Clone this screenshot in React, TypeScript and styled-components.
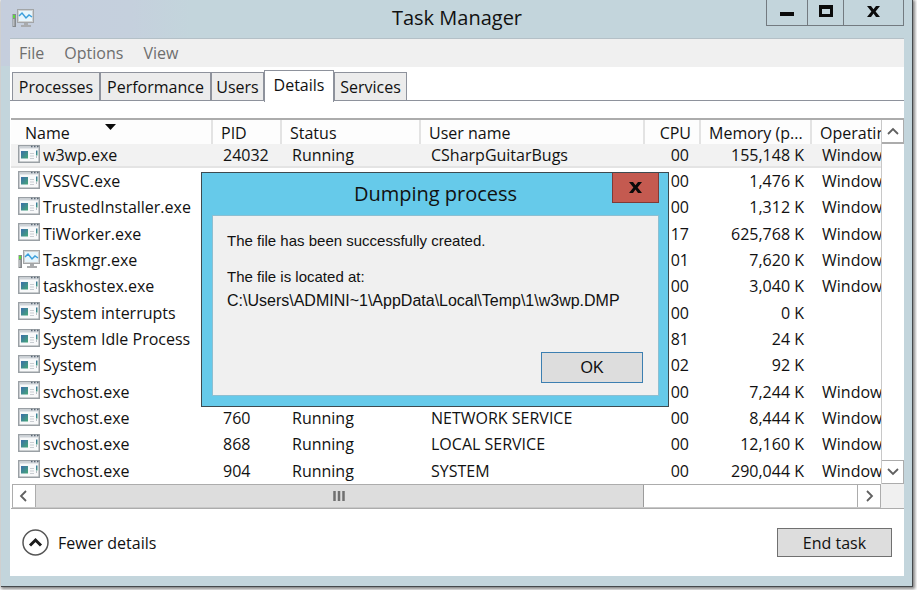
import React from "react";
import styled, { createGlobalStyle, css } from "styled-components";

const GlobalStyle = createGlobalStyle`
  *, *::before, *::after { box-sizing: border-box; }
  html, body { margin: 0; height: 100%; background: #ffffff; }
  #root { height: 100%; }
  body, button { font-family: "Open Sans", "Noto Sans", sans-serif; font-size: 16px; line-height: 20px; color: #111111; }
  button { margin: 0; padding: 0; border: 0; background: none; border-radius: 0; }
  svg { display: block; flex: none; }
`;

const Desktop = styled.div`
  min-height: 100vh;
  display: flex;
  padding: 0 4px 3px 1px;
  background: #ffffff;
  overflow: hidden;
`;

const Window = styled.section`
  position: relative;
  flex: 1;
  min-width: 0;
  display: flex;
  flex-direction: column;
  padding: 0 8px 10px 9px;
  background: linear-gradient(90deg, #c5cedd 0, #c5d0dd 130px, #c3d5dc 190px) 0 0 / 100% 66px no-repeat, #c3d5dc;
  border-right: 1px solid #45494c;
  border-bottom: 1px solid #45494c;
  box-shadow: 1px 1px 3px 1px #808080;
`;

const TitleBar = styled.header`
  height: 38px;
  flex: none;
  display: grid;
  grid-template-columns: 138px 1fr 138px;
  align-items: start;
`;

const AppIcon = styled.div`
  padding: 8px 0 0 2px;
`;

const Title = styled.h1`
  margin: 0;
  padding-top: 5px;
  font-size: 20px;
  line-height: 26px;
  font-weight: 400;
  text-align: center;
`;

const CaptionButtons = styled.div`
  display: grid;
  grid-template-columns: 40px 36px 1fr;
  height: 26px;
  border: 1px solid #737a80;
  border-top: 0;
`;

const CaptionButton = styled.button`
  display: flex;
  align-items: center;
  justify-content: center;
  padding-bottom: 3px;
  & + & { border-left: 1px solid #737a80; }
`;

const Client = styled.div`
  flex: 1;
  min-height: 0;
  display: flex;
  flex-direction: column;
  background: #ffffff;
  border-top: 1px solid #b4c0c7;
`;

const MenuBar = styled.nav`
  display: flex;
  gap: 20px;
  height: 28px;
  padding: 0 9px;
  background: #f0f0f0;
`;

const MenuItem = styled.button`
  color: #6e6e6e;
`;

const Tabs = styled.div`
  display: flex;
  align-items: flex-end;
  height: 34px;
  padding-left: 2px;
  border-bottom: 1px solid #8e929c;
`;

const Tab = styled.button<{ $active?: boolean; $width: number }>`
  width: ${(p) => p.$width}px;
  height: 28px;
  background: #ececec;
  border: 1px solid #8e929c;
  border-bottom: 0;
  white-space: nowrap;
  ${(p) =>
    p.$active &&
    css`
      height: 32px;
      margin-bottom: -2px;
      padding-bottom: 4px;
      background: #ffffff;
    `}
`;

const ListFrame = styled.div`
  flex: 1;
  min-height: 0;
  display: grid;
  grid-template-columns: minmax(0, 1fr) 23px;
  grid-template-rows: minmax(0, 1fr) 24px;
  margin: 17px 0 0 1px;
  border-top: 2px solid #acacac;
  border-bottom: 1px solid #acacac;
`;

const ListView = styled.div`
  overflow: hidden;
`;

const Table = styled.table`
  width: 100%;
  height: 100%;
  table-layout: fixed;
  border-collapse: separate;
  border-spacing: 0;
`;

const Col = styled.col<{ $width?: number }>`
  width: ${(p) => (p.$width ? `${p.$width}px` : "auto")};
`;

const HeadCell = styled.th<{ $right?: boolean; $wide?: boolean }>`
  position: relative;
  height: 24px;
  padding: ${(p) => (p.$wide ? "2px 0 0 14px" : "2px 8px 0")};
  border-right: 2px solid #e3e3e3;
  background: #fdfdfd;
  font-weight: 400;
  text-align: ${(p) => (p.$right ? "right" : "left")};
  white-space: nowrap;
  overflow: hidden;
  &:last-child { border-right: 0; padding-right: 0; }
`;

const SortMark = styled.svg`
  position: absolute;
  top: 4px;
  left: 50%;
  margin-left: -6px;
`;

const Row = styled.tr<{ $selected?: boolean }>`
  ${(p) =>
    p.$selected &&
    css`
      height: 24px;
      background: #f2f2f2;
      & > td { border-bottom: 2px solid #e4e4e4; }
    `}
`;

const Cell = styled.td<{ $right?: boolean }>`
  padding: 0 8px 0 10px;
  text-align: ${(p) => (p.$right ? "right" : "left")};
  white-space: nowrap;
  overflow: hidden;
  &:last-child { padding-right: 0; }
`;

const CpuCell = styled(Cell)`
  padding-right: 12px;
`;

const NameCell = styled(Cell)`
  padding: 0 0 0 7px;
`;

const NameContent = styled.span`
  display: flex;
  align-items: center;
  gap: 3px;
  & > svg { margin-top: -4px; margin-bottom: -1px; }
`;

const VerticalBar = styled.div`
  display: flex;
  flex-direction: column;
  justify-content: space-between;
  border-left: 1px solid #c8c8c8;
`;

const HorizontalBar = styled.div`
  display: flex;
  margin-left: 1px;
  border: 1px solid #acacac;
  border-bottom-color: #c8c8c8;
`;

const ArrowButton = styled.button<{ $side: "top" | "bottom" | "left" | "right" }>`
  display: flex;
  align-items: center;
  justify-content: center;
  flex: none;
  width: ${(p) => (p.$side === "top" || p.$side === "bottom" ? "100%" : "23px")};
  height: ${(p) => (p.$side === "top" || p.$side === "bottom" ? "24px" : "100%")};
  background: #ffffff;
  border: 0 solid #acacac;
  ${(p) => p.$side === "top" && "border-width: 0 1px 2px 0;"}
  ${(p) => p.$side === "bottom" && "border-width: 1px 1px 1px 0;"}
  ${(p) => p.$side === "left" && "border-right-width: 1px;"}
  ${(p) => p.$side === "right" && "border-left-width: 1px;"}
`;

const Track = styled.div`
  flex: 1;
  display: flex;
  background: #ffffff;
`;

const Thumb = styled.div`
  width: 74%;
  display: flex;
  align-items: center;
  justify-content: center;
  background: #dddddd;
  border-right: 1px solid #9c9c9c;
`;

const Corner = styled.div`
  background: #f0f0f0;
`;

const Footer = styled.footer`
  flex: none;
  display: flex;
  align-items: center;
  justify-content: space-between;
  height: 67px;
  padding: 0 12px 0 12px;
`;

const FewerDetails = styled.button`
  display: flex;
  align-items: center;
  gap: 9px;
`;

const PushButton = styled.button<{ $default?: boolean }>`
  width: ${(p) => (p.$default ? 102 : 115)}px;
  height: ${(p) => (p.$default ? 31 : 29)}px;
  background: #dddddd;
  border: 1px solid ${(p) => (p.$default ? "#3c7fb1" : "#707070")};
`;

const Dialog = styled.div`
  position: absolute;
  top: 172px;
  left: 200px;
  width: 468px;
  padding: 0 9px 10px 10px;
  background: #66caea;
  border: 1px solid #3d4a50;
`;

const DialogBar = styled.div`
  display: grid;
  grid-template-columns: 47px 1fr 47px;
  height: 42px;
`;

const DialogTitle = styled.h2`
  margin: 0;
  padding-top: 8px;
  font-size: 20px;
  line-height: 26px;
  font-weight: 400;
  text-align: center;
`;

const DialogClose = styled.button`
  display: flex;
  align-items: center;
  justify-content: center;
  height: 30px;
  background: #c45a50;
  border: 1px solid #7e3a37;
  border-top: 0;
`;

const DialogBody = styled.div`
  display: flex;
  flex-direction: column;
  padding: 13px 15px 12px 14px;
  background: #f0f0f0;
  border: 1px solid #8cbfd2;
  font-family: "Liberation Sans", Arial, sans-serif;
`;

const Message = styled.p`
  margin: 0 0 12px;
  font-size: 15px;
  line-height: 24px;
  white-space: nowrap;
`;

const FilePath = styled.span`
  display: block;
  font-size: 16px;
`;

const DialogActions = styled.div`
  display: flex;
  justify-content: flex-end;
  padding-top: 27px;
  & > button { font-family: inherit; font-size: 16px; }
`;

const MonitorIcon = () => (
  <svg width="22" height="20" viewBox="0 0 22 20" aria-hidden="true">
    <rect x="0.5" y="6" width="3.500" height="13" fill="#85898c" />
    <rect x="1" y="7" width="2" height="3" fill="#5edb3c" />
    <rect x="1" y="11" width="1.500" height="7" fill="#b9bcbf" />
    <rect x="5.5" y="1.500" width="16" height="13" fill="#d0d2d3" stroke="#a2a5a7" />
    <rect x="7" y="3" width="13" height="10" fill="#e6f5fc" />
    <path d="M7 8l3-3 4 5 3-3 3 2" fill="none" stroke="#3b9fdc" strokeWidth="1.5" />
    <path d="M12 15h4v2h3v2H9v-2h3z" fill="#a9abad" />
  </svg>
);

const ProgramIcon = () => (
  <svg width="22" height="18" viewBox="0 0 22 18" aria-hidden="true">
    <defs>
      <linearGradient id="pane" x1="0" y1="0" x2="1" y2="1">
        <stop offset="0" stopColor="#3a6dab" />
        <stop offset="1" stopColor="#46a877" />
      </linearGradient>
    </defs>
    <rect x="0.75" y="0.75" width="20.5" height="16.5" fill="#f8f9fa" stroke="#9aa0a5" strokeWidth="1.5" />
    <rect x="1.5" y="1.5" width="19" height="2" fill="#ced3d8" />
    <path d="M13 1.500h1.500M16 1.500h1.500M19 1.500h1.500" stroke="#5c6876" strokeWidth="1.5" />
    <rect x="3" y="6" width="7" height="7.5" fill="url(#pane)" />
    <path d="M12 8.5h4M12 11h4M12 13.5h4" stroke="#c9cdd2" />
    <rect x="18" y="5.5" width="1.500" height="5" fill="url(#pane)" />
    <path d="M18.5 11v2" stroke="#b9bec4" />
  </svg>
);

const Chevron = ({ d }: { d: string }) => (
  <svg width="12" height="12" viewBox="0 0 12 12" aria-hidden="true">
    <path d={d} fill="none" stroke="#606060" strokeWidth="1.800" />
  </svg>
);

const Cross = () => (
  <svg width="13" height="11" viewBox="0 0 13 11" aria-hidden="true">
    <path d="M0 0h4l2.5 3.2L9 0h4L8.6 5.4 13 11H9L6.5 7.6 4 11H0l4.4-5.6z" fill="#0b0b0b" />
  </svg>
);

type Process = { name: string; pid?: string; status?: string; user?: string; cpu: string; memory: string; platform?: string };

const processes: Process[] = [
  { name: "w3wp.exe", pid: "24032", status: "Running", user: "CSharpGuitarBugs", cpu: "00", memory: "155,148 K", platform: "Window" },
  { name: "VSSVC.exe", cpu: "00", memory: "1,476 K", platform: "Window" },
  { name: "TrustedInstaller.exe", cpu: "00", memory: "1,312 K", platform: "Window" },
  { name: "TiWorker.exe", cpu: "17", memory: "625,768 K", platform: "Window" },
  { name: "Taskmgr.exe", cpu: "01", memory: "7,620 K", platform: "Window" },
  { name: "taskhostex.exe", cpu: "00", memory: "3,040 K", platform: "Window" },
  { name: "System interrupts", cpu: "00", memory: "0 K" },
  { name: "System Idle Process", cpu: "81", memory: "24 K" },
  { name: "System", cpu: "02", memory: "92 K" },
  { name: "svchost.exe", cpu: "00", memory: "7,244 K", platform: "Window" },
  { name: "svchost.exe", pid: "760", status: "Running", user: "NETWORK SERVICE", cpu: "00", memory: "8,444 K", platform: "Window" },
  { name: "svchost.exe", pid: "868", status: "Running", user: "LOCAL SERVICE", cpu: "00", memory: "12,160 K", platform: "Window" },
  { name: "svchost.exe", pid: "904", status: "Running", user: "SYSTEM", cpu: "00", memory: "290,044 K", platform: "Window" },
];

const tabs = [
  { label: "Processes", width: 88 },
  { label: "Performance", width: 111 },
  { label: "Users", width: 53 },
  { label: "Details", width: 70 },
  { label: "Services", width: 73 },
];

export default function App() {
  return (
    <>
      <GlobalStyle />
      <Desktop>
        <Window aria-label="Task Manager">
          <TitleBar>
            <AppIcon><MonitorIcon /></AppIcon>
            <Title>Task Manager</Title>
            <CaptionButtons>
              <CaptionButton aria-label="Minimize">
                <svg width="14" height="12" viewBox="0 0 14 12"><rect y="7" width="14" height="4" fill="#0b0b0b" /></svg>
              </CaptionButton>
              <CaptionButton aria-label="Maximize">
                <svg width="14" height="12" viewBox="0 0 14 12"><path d="M0 0h14v12H0zM3 4v5h8V4z" fillRule="evenodd" fill="#0b0b0b" /></svg>
              </CaptionButton>
              <CaptionButton aria-label="Close"><Cross /></CaptionButton>
            </CaptionButtons>
          </TitleBar>

          <Client>
            <MenuBar>
              <MenuItem>File</MenuItem>
              <MenuItem>Options</MenuItem>
              <MenuItem>View</MenuItem>
            </MenuBar>
            <Tabs role="tablist">
              {tabs.map((t) => (
                <Tab key={t.label} role="tab" aria-selected={t.label === "Details"} $active={t.label === "Details"} $width={t.width}>
                  {t.label}
                </Tab>
              ))}
            </Tabs>

            <ListFrame>
              <ListView>
                <Table>
                  <colgroup>
                    <Col $width={202} />
                    <Col $width={69} />
                    <Col $width={139} />
                    <Col />
                    <Col $width={56} />
                    <Col $width={111} />
                    <Col $width={69} />
                  </colgroup>
                  <thead>
                    <tr>
                      <HeadCell $wide>
                        Name
                        <SortMark width="11" height="6" viewBox="0 0 11 6"><path d="M0 0h11L5.5 6z" fill="#0b0b0b" /></SortMark>
                      </HeadCell>
                      <HeadCell>PID</HeadCell>
                      <HeadCell>Status</HeadCell>
                      <HeadCell>User name</HeadCell>
                      <HeadCell $right>CPU</HeadCell>
                      <HeadCell>Memory (p...</HeadCell>
                      <HeadCell>Operatin</HeadCell>
                    </tr>
                  </thead>
                  <tbody>
                    {processes.map((p, i) => (
                      <Row key={i} $selected={i === 0}>
                        <NameCell>
                          <NameContent>
                            {p.name === "Taskmgr.exe" ? <MonitorIcon /> : <ProgramIcon />}
                            {p.name}
                          </NameContent>
                        </NameCell>
                        <Cell>{p.pid}</Cell>
                        <Cell>{p.status}</Cell>
                        <Cell>{p.user}</Cell>
                        <CpuCell $right>{p.cpu}</CpuCell>
                        <Cell $right>{p.memory}</Cell>
                        <Cell>{p.platform}</Cell>
                      </Row>
                    ))}
                  </tbody>
                </Table>
              </ListView>
              <VerticalBar>
                <ArrowButton $side="top" aria-label="Scroll up"><Chevron d="M1 9l5-5 5 5" /></ArrowButton>
                <ArrowButton $side="bottom" aria-label="Scroll down"><Chevron d="M1 3l5 5 5-5" /></ArrowButton>
              </VerticalBar>
              <HorizontalBar>
                <ArrowButton $side="left" aria-label="Scroll left"><Chevron d="M8 1L3 6l5 5" /></ArrowButton>
                <Track>
                  <Thumb>
                    <svg width="12" height="10" viewBox="0 0 12 10"><path d="M1.5 0v10M6 0v10M10.500 0v10" stroke="#707070" strokeWidth="2.500" /></svg>
                  </Thumb>
                </Track>
                <ArrowButton $side="right" aria-label="Scroll right"><Chevron d="M4 1l5 5-5 5" /></ArrowButton>
              </HorizontalBar>
              <Corner />
            </ListFrame>

            <Footer>
              <FewerDetails>
                <svg width="27" height="27" viewBox="0 0 27 27" aria-hidden="true">
                  <circle cx="13.5" cy="13.5" r="12.5" fill="#ffffff" stroke="#555555" strokeWidth="1.5" />
                  <path d="M8 16.500l5.500-5.500 5.500 5.500" fill="none" stroke="#1c1c1c" strokeWidth="3" />
                </svg>
                Fewer details
              </FewerDetails>
              <PushButton>End task</PushButton>
            </Footer>
          </Client>

          <Dialog role="dialog" aria-labelledby="dialog-title">
            <DialogBar>
              <span />
              <DialogTitle id="dialog-title">Dumping process</DialogTitle>
              <DialogClose aria-label="Close dialog"><Cross /></DialogClose>
            </DialogBar>
            <DialogBody>
              <Message>The file has been successfully created.</Message>
              <Message>
                The file is located at:
                <FilePath>C:\Users\ADMINI~1\AppData\Local\Temp\1\w3wp.DMP</FilePath>
              </Message>
              <DialogActions>
                <PushButton $default>OK</PushButton>
              </DialogActions>
            </DialogBody>
          </Dialog>
        </Window>
      </Desktop>
    </>
  );
}
